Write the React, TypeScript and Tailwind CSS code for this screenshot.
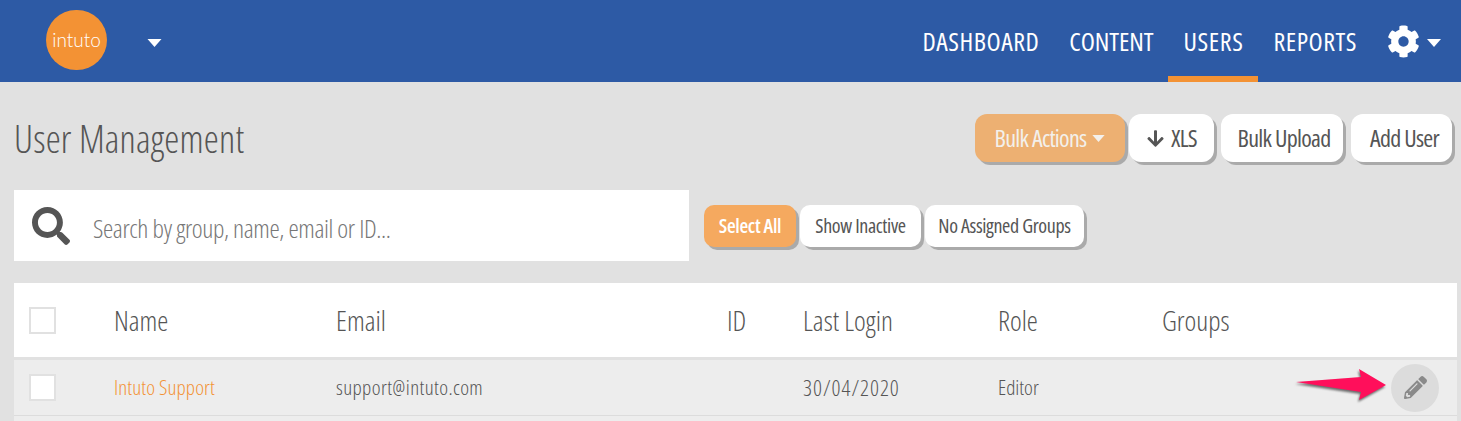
import { FaArrowDown, FaCog, FaPencilAlt, FaSearch } from "react-icons/fa";

function Caret({ className }: { className: string }) {
  return (
    <svg viewBox="0 0 14 8" className={className} fill="currentColor">
      <path d="M0 0h14L7 8z" />
    </svg>
  );
}

function Checkbox() {
  return <div className="w-[27px] h-[27px] bg-white border-2 border-[#e1e1e1]" />;
}

function Btn({ className, children }: { className: string; children: React.ReactNode }) {
  return (
    <button className={`flex items-center justify-center shadow-[3px_3px_0_#aaa] ${className}`}>
      {children}
    </button>
  );
}

const navItems = [
  { label: "DASHBOARD", cls: "tracking-[0.5px]" },
  { label: "CONTENT", cls: "tracking-[-0.1px]" },
  { label: "USERS", cls: "tracking-[0.6px]" },
  { label: "REPORTS", cls: "tracking-[0.5px]" },
];
const columns = ["Name", "Email", "ID", "Last Login", "Role", "Groups"];
const grid = "grid grid-cols-[85px_222px_391px_76px_195px_164px_150px_1fr] items-center pl-[15px]";

export default function App() {
  return (
    <div className="relative w-[1461px] h-[421px] overflow-hidden bg-[#e1e1e1] text-[#555] font-['Open_Sans',sans-serif] [font-stretch:75%]">
      <header className="h-[82px] bg-[#2d5aa5] flex items-center pl-[46px] pr-5">
        <div className="w-[61px] h-[60px] -mt-[2px] rounded-full bg-[#f39234] flex items-center justify-center text-white font-['Lato',sans-serif] font-light text-[19px] [font-stretch:100%]">
          intuto
        </div>
        <Caret className="w-[15px] h-2 ml-10 mt-[3px] text-white" />
        <nav className="ml-auto flex h-full items-center text-white text-[26px]">
          {navItems.map((n) => (
            <a
              key={n.label}
              className={`h-full flex items-center px-[15px] ${n.cls} ${n.label === "USERS" ? "border-b-[6px] border-[#f39234] pt-[6px]" : ""}`}
            >
              {n.label}
            </a>
          ))}
        </nav>
        <div className="ml-[15px] flex items-center gap-[7px] text-white">
          <FaCog className="w-[33px] h-[33px]" />
          <Caret className="w-[14px] h-2 mt-[3px]" />
        </div>
      </header>

      <div className="flex h-12 items-center justify-between pl-[14px] pr-[9px] mt-8">
        <h1 className="text-[38px] font-light tracking-[0.2px]">User Management</h1>
        <div className="flex text-[24px] tracking-[-0.7px]">
          <Btn className="w-[150px] h-12 rounded-xl bg-[#edb072] text-[#f3f0ec] gap-[6px] mr-1">
            Bulk Actions
            <Caret className="w-[13px] h-[7px]" />
          </Btn>
          <Btn className="w-[85px] h-12 rounded-xl bg-white gap-[6px] mr-[7px]">
            <FaArrowDown className="w-[19px] h-[19px]" />
            XLS
          </Btn>
          <Btn className="w-[122px] h-12 rounded-xl bg-white mr-2 pl-1">Bulk Upload</Btn>
          <Btn className="w-[101px] h-12 rounded-xl bg-white pl-[6px]">Add User</Btn>
        </div>
      </div>

      <div className="flex items-center pl-[14px] mt-7">
        <div className="w-[675px] h-[71px] bg-white flex items-center pl-[18px] pr-3">
          <FaSearch className="w-[38px] h-[38px] text-[#555]" />
          <span className="ml-[23px] pt-[5px] text-[26px] tracking-[-0.4px] font-light text-[#777]">
            Search by group, name, email or ID...
          </span>
        </div>
        <div className="flex text-[20px] tracking-[-0.35px] ml-[15px]">
          <Btn className="w-[92px] h-[42px] rounded-[10px] bg-[#f5a95f] text-white font-semibold mr-1">Select All</Btn>
          <Btn className="w-[121px] h-[42px] rounded-[10px] bg-white mr-1">Show Inactive</Btn>
          <Btn className="w-[159px] h-[42px] rounded-[10px] bg-white">No Assigned Groups</Btn>
        </div>
      </div>

      <div className="w-[1443px] ml-[14px] mt-[22px]">
        <div className={`${grid} h-[77px] bg-white border-b-[3px] border-[#e1e1e1] text-[28px] font-light`}>
          <Checkbox />
          {columns.map((c) => (
            <span key={c}>{c}</span>
          ))}
        </div>
        <div className={`${grid} h-[56px] bg-[#ededed] border-b border-[#dcdcdc] text-[21px] font-light`}>
          <Checkbox />
          <span className="text-[#f39234] tracking-[0.1px]">Intuto Support</span>
          <span className="tracking-[0.4px]">support@intuto.com</span>
          <span />
          <span className="text-[22px] tracking-[1px]">30/04/2020</span>
          <span>Editor</span>
          <span />
          <div className="flex justify-end pr-[18px]">
            <div className="w-12 h-12 rounded-full bg-[#dcdcdc] flex items-center justify-center text-[#8a8a8a]">
              <FaPencilAlt className="w-[23px] h-[23px]" />
            </div>
          </div>
        </div>
        <div className="h-[10px] bg-[#ededed]" />
      </div>

      <svg
        viewBox="0 0 94 36"
        className="absolute left-[1295px] top-[367px] w-[94px] h-9 drop-shadow-[-1px_2px_1px_rgba(0,0,0,0.55)]"
      >
        <path d="M1 15 L66 10 L64 2 L91 18 L64 33 L66 25 Z" fill="#ff0f5b" />
      </svg>
    </div>
  );
}
